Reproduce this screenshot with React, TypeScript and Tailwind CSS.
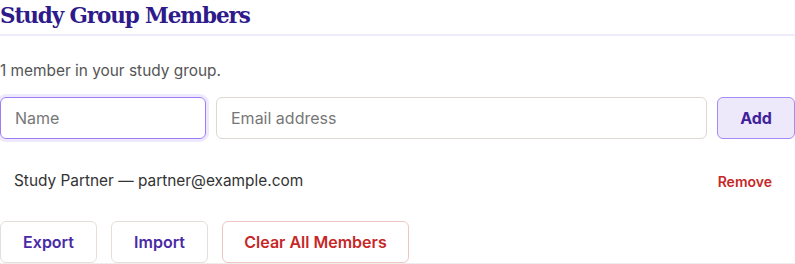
import React from "react";

export default function App() {
  return (
    <div className="w-[795px] bg-white font-['Inter','Liberation_Sans',sans-serif]">
      <h2 className="font-['DejaVu_Serif','Liberation_Serif',serif] text-[21.5px] font-bold leading-[28px] text-[#2e1a8a] pt-[2px] pb-[4px] border-b-2 border-[#f0ebfc] tracking-[-1.1px]">
        Study Group Members
      </h2>
      <p className="mt-[24px] text-[15.4px] leading-[22px] text-[#555]">
        1 member in your study group.
      </p>
      <div className="mt-[15px] flex gap-[10px] h-[42px]">
        <input
          placeholder="Name"
          className="w-[206px] h-[42px] rounded-md border-[1.5px] border-[#9f7cf7] ring-[3px] ring-[#efe9fd] px-[14px] text-[16px] text-[#333] placeholder:text-[#777] outline-none"
        />
        <input
          placeholder="Email address"
          className="flex-1 h-[42px] rounded-md border border-[#ddd8d2] px-[14px] text-[16px] text-[#333] placeholder:text-[#777] outline-none"
        />
        <button className="w-[78px] h-[42px] rounded-md border border-[#a88af6] bg-[#ede8fa] text-[16px] font-bold text-[#3f1f9c]">
          Add
        </button>
      </div>
      <div className="mt-[20px] h-[44px] flex items-center justify-between pl-[14px] pr-[14px]">
        <span className="text-[15.4px] text-[#333]">Study Partner — partner@example.com</span>
        <button className="px-[9px] text-[14px] font-semibold text-[#c62828]">Remove</button>
      </div>
      <div className="mt-[18px] flex gap-[14px]">
        <button className="w-[97px] h-[42px] rounded-md border border-[#e4dfd9] text-[16px] font-semibold text-[#4a2aa6]">
          Export
        </button>
        <button className="w-[97px] h-[42px] rounded-md border border-[#e4dfd9] text-[16px] font-semibold text-[#4a2aa6]">
          Import
        </button>
        <button className="w-[187px] h-[42px] rounded-md border border-[#efc6c6] text-[16px] font-semibold text-[#c62828]">
          Clear All Members
        </button>
      </div>
      <div className="border-t border-[#f0eeec]" />
    </div>
  );
}
